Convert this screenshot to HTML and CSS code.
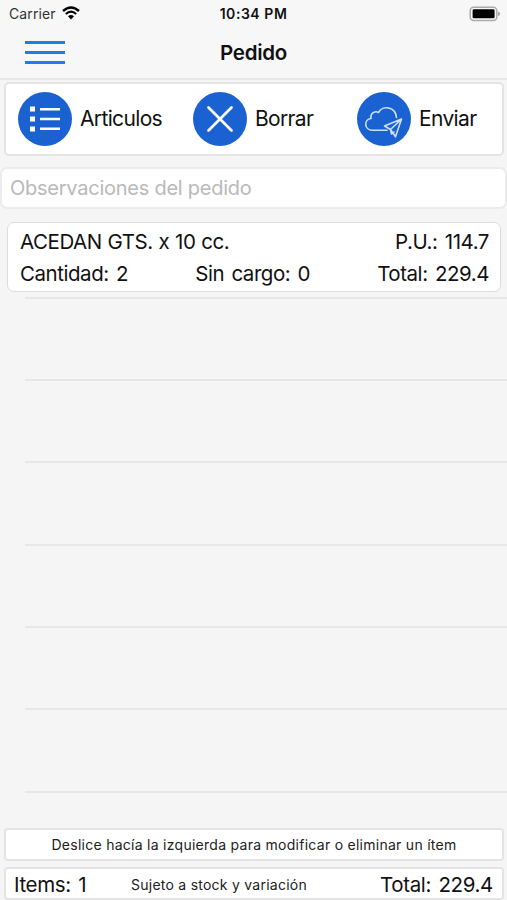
FILE: index.html
```html
<!DOCTYPE html>
<html lang="es">
<head>
    <meta charset="UTF-8">
    <meta name="viewport" content="width=device-width, initial-scale=1.0">
    <title>Pedido</title>
    <link rel="stylesheet" href="styles.css">
</head>
<body>
    <header>
        <div class="status-bar">
            <div class="carrier">
                <span>Carrier</span>
                <svg class="wifi" width="18" height="14" viewBox="0 0 18 14">
                    <path d="M1 5Q9-2 17 5" fill="none" stroke="#000" stroke-width="2.4"/>
                    <path d="M3.8 8Q9 3.4 14.2 8" fill="none" stroke="#000" stroke-width="2.2"/>
                    <path d="M6 10.2Q9 7.6 12 10.2L9 13.4Z" fill="#000"/>
                </svg>
            </div>
            <span class="time">10:34 PM</span>
            <svg class="battery" width="32" height="16" viewBox="0 0 32 16">
                <rect x="1.2" y="1.2" width="26.6" height="13.2" rx="3.5" fill="#f7f7f7" stroke="#aaa" stroke-width="1.5"/>
                <rect x="3.6" y="3.3" width="22" height="9" rx="1.4" fill="#000"/>
                <path d="M29 5.4Q31.2 6.2 31.2 7.8T29 10.2Z" fill="#aaa"/>
            </svg>
        </div>
        <div class="nav-bar">
            <button class="menu" type="button" aria-label="Menu">
                <i></i><i></i><i></i>
            </button>
            <h1>Pedido</h1>
        </div>
    </header>

    <div class="toolbar">
        <button class="action articulos" type="button">
            <svg width="54" height="54" viewBox="0 0 54 54">
                <circle cx="27" cy="27" r="27" fill="#1a62d2"/>
                <path d="M12 14.5h5v5h-5zM12 24.5h5v5h-5zM12 34.5h5v5h-5z" fill="#fff"/>
                <path d="M22 17.2h20M22 27h20M22 36.8h20" fill="none" stroke="#fff" stroke-width="2.4"/>
            </svg>
            <span>Articulos</span>
        </button>
        <button class="action borrar" type="button">
            <svg width="54" height="54" viewBox="0 0 54 54">
                <circle cx="27" cy="27" r="27" fill="#1a62d2"/>
                <path d="M15.5 15.5l23 23M38.5 15.5l-23 23" fill="none" stroke="#fff" stroke-width="2.7" stroke-linecap="round"/>
            </svg>
            <span>Borrar</span>
        </button>
        <button class="action enviar" type="button">
            <svg width="54" height="54" viewBox="0 0 54 54">
                <circle cx="27" cy="27" r="27" fill="#1a62d2"/>
                <g fill="none" stroke="#cfe0fb" stroke-width="1.6" stroke-linejoin="round" stroke-linecap="round">
                    <path d="M30 38.2H15.5C7 38.2 6.500 27.500 14 26.500C13 21 18.500 18.500 21.500 20.500C25.500 12.800 38.500 14.500 39.500 25.500"/>
                    <path d="M44.500 27L27.500 34L33.500 37.500L38.500 44.800ZM44.500 27L33.500 37.500L34.500 42L37 40"/>
                </g>
            </svg>
            <span>Enviar</span>
        </button>
    </div>

    <input class="observaciones" type="text" placeholder="Observaciones del pedido">

    <main>
        <div class="item">
            <div class="row">
                <span class="nombre">ACEDAN GTS. x 10 cc.</span>
                <span class="precio">P.U.: 114.7</span>
            </div>
            <div class="row">
                <span class="cantidad">Cantidad: 2</span>
                <span class="cargo">Sin cargo: 0</span>
                <span class="subtotal">Total: 229.4</span>
            </div>
        </div>
        <div class="lines">
            <div></div>
            <div></div>
            <div></div>
            <div></div>
            <div></div>
            <div></div>
            <div></div>
        </div>
    </main>

    <footer>
        <div class="hint"><span>Deslice hacía la izquierda para modificar o eliminar un ítem</span></div>
        <div class="totals">
            <span class="items">Items: 1</span>
            <span class="stock">Sujeto a stock y variación</span>
            <span class="total">Total: 229.4</span>
        </div>
    </footer>
</body>
</html>
```
FILE: styles.css
```css
* {
    box-sizing: border-box;
}
body {
    margin: 0;
    height: 900px;
    overflow: hidden;
    display: flex;
    flex-direction: column;
    background-color: #f5f5f5;
    color: #111;
    font-family: Inter, "Liberation Sans", sans-serif;
    font-size: 20px;
}
span, h1 {
    white-space: nowrap;
}
button {
    padding: 0;
    border: none;
    background: none;
    color: inherit;
    font: inherit;
}
header {
    height: 80px;
    background-color: #f7f7f7;
    border-bottom: 2px solid #e8e8e8;
}
.status-bar {
    display: grid;
    grid-template-columns: 1fr auto 1fr;
    height: 27px;
    padding: 0 6px 0 9px;
    align-items: center;
    font-size: 14px;
}
.carrier {
    display: flex;
    align-items: center;
    gap: 6px;
    color: #333;
    letter-spacing: 0.1px;
}
.wifi {
    margin-top: -2px;
}
.time {
    margin-right: 3px;
    font-size: 14px;
    font-weight: 600;
    letter-spacing: 0.55px;
}
.battery {
    justify-self: end;
}
.nav-bar {
    display: grid;
    grid-template-columns: 1fr auto 1fr;
    align-items: center;
    height: 50px;
    padding: 0 25px;
}
.menu {
    display: flex;
    flex-direction: column;
    gap: 7px;
    width: 40px;
}
.menu i {
    height: 3px;
    background-color: #1b7fe8;
}
h1 {
    margin: 0;
    font-size: 20.5px;
    font-weight: 600;
    letter-spacing: -0.3px;
}
.toolbar, .item, .hint, .totals {
    background-color: #fff;
    border: 2px solid #e4e4e4;
    border-radius: 5px;
}
.toolbar {
    display: flex;
    align-items: center;
    height: 74px;
    margin: 2px 3px 0 4px;
    padding-left: 12px;
}
.action {
    display: flex;
    align-items: center;
    gap: 8px;
    font-size: 21px;
    letter-spacing: -0.65px;
}
.articulos {
    width: 175px;
}
.borrar {
    width: 164px;
}
.observaciones {
    height: 42px;
    margin: 11px 0 0;
    padding: 1px 8px 0;
    background-color: #fff;
    border: 2px solid #ececec;
    border-radius: 7px;
    font: inherit;
    letter-spacing: -0.25px;
    outline: none;
}
.observaciones::placeholder {
    color: #b9b9b9;
}
.item {
    height: 70px;
    margin: 13px 6px 0 7px;
    padding: 1px 11px 1px 12px;
    border-width: 1.5px;
    border-color: #ddd;
    border-radius: 7px;
    font-size: 20.5px;
    letter-spacing: -0.45px;
    word-spacing: 2px;
}
.row {
    display: flex;
    justify-content: space-between;
    height: 32px;
    line-height: 35px;
}
.nombre {
    word-spacing: 0.5px;
}
.lines {
    margin: 5px 0 0 25px;
}
.lines div {
    height: 82.3px;
    border-top: 2px solid #e7e7e7;
}
main {
    height: 620px;
    overflow: hidden;
}
footer {
    margin-top: auto;
}
.hint, .totals {
    height: 33px;
    margin: 0 3px 0 4px;
    border-radius: 4px;
}
.hint {
    display: flex;
    align-items: center;
    justify-content: center;
    margin-bottom: 6px;
    padding-bottom: 1px;
    color: #222;
    font-size: 14px;
    letter-spacing: 0.27px;
}
.totals {
    display: flex;
    align-items: center;
    padding: 2px 9px 0 8px;
    font-size: 20.5px;
    letter-spacing: -0.35px;
    word-spacing: 2px;
}
.items {
    width: 117px;
}
.stock {
    color: #222;
    font-size: 14px;
    letter-spacing: 0.25px;
    word-spacing: 0;
}
.total {
    margin-left: auto;
}
```
